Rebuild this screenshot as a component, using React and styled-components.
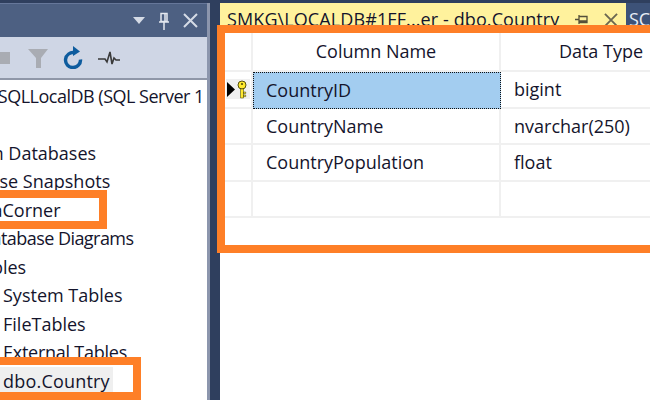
import React from 'react';
import styled, { createGlobalStyle } from 'styled-components';

const Global = createGlobalStyle`
  html, body {
    margin: 0;
    padding: 0;
    background: #2f3f5e;
  }
  * {
    box-sizing: border-box;
  }
`;

const Page = styled.div`
  position: relative;
  width: 650px;
  height: 400px;
  overflow: hidden;
  display: flex;
  padding-top: 3px;
  background: #2f3f5e;
  font-family: 'Open Sans', 'Noto Sans', sans-serif;
  font-size: 18px;
  color: #14142c;
`;

const Explorer = styled.div`
  width: 210px;
  flex-shrink: 0;
  display: flex;
  flex-direction: column;
  border-right: 3px solid #8c96ad;
`;

const TitleBar = styled.div`
  height: 34px;
  flex-shrink: 0;
  display: flex;
  align-items: center;
  justify-content: flex-end;
  gap: 13px;
  padding-right: 9px;
  background: #4d6082;
  border-top: 1px solid #66779a;
`;

const Toolbar = styled.div`
  height: 43px;
  flex-shrink: 0;
  display: flex;
  align-items: center;
  gap: 15px;
  background: #cfd6e5;
  border-bottom: 2px solid #8f97a8;
`;

const StopButton = styled.div`
  width: 10px;
  height: 12px;
  margin-right: 3px;
  background: #a9acb3;
`;

const Tree = styled.div`
  position: relative;
  flex: 1;
  overflow: hidden;
  padding-top: 2px;
  background: #fff;
`;

const TreeRow = styled.div`
  height: 28.5px;
  line-height: 28px;
  white-space: nowrap;
  margin-left: ${(props) => props.$indent}px;
  letter-spacing: ${(props) => props.$spacing || 0}px;
`;

const Spacer = styled.div`
  height: 28px;
`;

const SelectedNode = styled.span`
  display: inline-block;
  padding: 0 3px 0 3px;
  background: #efefef;
  letter-spacing: 0.2px;
`;

const Callout = styled.div`
  position: absolute;
  border: 8px solid #fe7f27;
  pointer-events: none;
`;

const TreeCallout = styled(Callout)`
  left: -20px;
  top: ${(props) => props.$top}px;
  width: ${(props) => props.$width}px;
  height: ${(props) => props.$height}px;
`;

const GridCallout = styled(Callout)`
  left: 217px;
  top: 25px;
  width: 460px;
  height: 228px;
`;

const Editor = styled.div`
  flex: 1;
  min-width: 0;
  margin-left: 10px;
  display: flex;
  flex-direction: column;
`;

const TabStrip = styled.div`
  height: 24px;
  flex-shrink: 0;
  display: flex;
  overflow: hidden;
`;

const ActiveTab = styled.div`
  width: 406px;
  flex-shrink: 0;
  display: flex;
  align-items: flex-start;
  padding: 0 8px 0 7px;
  background: #fff29d;
  white-space: nowrap;
`;

const TabTitle = styled.span`
  flex: 1;
  padding-top: 4px;
  line-height: 24px;
  letter-spacing: 0.1px;
`;

const TabIcons = styled.span`
  display: flex;
  gap: 16px;
  padding-top: 10px;
`;

const NextTab = styled.div`
  flex: 1;
  padding: 4px 0 0 3px;
  background: #3d5278;
  color: #e8edf5;
  line-height: 24px;
`;

const Designer = styled.div`
  flex: 1;
  padding: 6px 0 0 5px;
  background: #fff;
`;

const GridRow = styled.div`
  display: grid;
  grid-template-columns: 28px 248px 200px;
  height: ${(props) => (props.$header ? 39 : 36.6)}px;
  border-bottom: 2px solid #f0f0f0;
`;

const RowHeader = styled.div`
  display: flex;
  align-items: center;
  justify-content: center;
  border-right: 2px solid #f0f0f0;
`;

const KeyMarker = styled.div`
  width: 24px;
  height: 20px;
  display: flex;
  align-items: center;
  justify-content: center;
  background: #f0f0f0;
`;

const Cell = styled.div`
  display: flex;
  align-items: center;
  justify-content: ${(props) => (props.$head ? 'center' : 'flex-start')};
  padding: ${(props) => (props.$head ? '0 0 2px' : '0 0 0 13px')};
  border-right: ${(props) => (props.$last ? 'none' : '2px solid #f0f0f0')};
  white-space: nowrap;
  overflow: hidden;
`;

const SelectedCell = styled(Cell)`
  margin-bottom: -2px;
  background: #a3cdf0;
  border: 1px dotted #111;
  padding-left: 12px;
`;

const DropIcon = () => (
  <svg width="12" height="7" viewBox="0 0 12 7">
    <path d="M0 0h12L6 7z" fill="#d5dbe6" />
  </svg>
);

const PinIcon = () => (
  <svg width="12" height="18" viewBox="0 0 12 18" fill="none" stroke="#e4e8f0" strokeWidth="1.5">
    <path d="M3 1.5h6v8H3zM7 2v7M1 10h10M6 10v8" />
  </svg>
);

const CloseIcon = ({ size = 15, color = '#d5dbe6' }) => (
  <svg width={size} height={size} viewBox="0 0 15 15" fill="none" stroke={color} strokeWidth="2">
    <path d="M1 1l13 13M14 1L1 14" />
  </svg>
);

const FilterIcon = () => (
  <svg width="20" height="20" viewBox="0 0 20 20">
    <path d="M0 1h20l-7 9v10H8V10z" fill="#a9acb3" />
  </svg>
);

const RefreshIcon = () => (
  <svg width="20" height="23" viewBox="0 0 20 23" fill="none">
    <path d="M11.5 6.7A7.5 7.5 0 1 0 17.5 13.5" stroke="#0e5c9e" strokeWidth="3.4" />
    <path d="M10 0l7 5.5-7 4.5z" fill="#0e5c9e" />
  </svg>
);

const ActivityIcon = () => (
  <svg width="23" height="14" viewBox="0 0 23 14" fill="none" stroke="#3a3a3a" strokeWidth="1.6">
    <path d="M0 8h7l2 3 3-10 2 12 2-6 2 2h4" />
  </svg>
);

const TabPinIcon = () => (
  <svg width="13" height="13" viewBox="0 0 13 13" fill="none" stroke="#55503a" strokeWidth="1.3">
    <path d="M0 6.5h4M4 2v9M4 3.5h8v6H4M4 8h8" />
  </svg>
);

const KeyIcon = () => (
  <svg width="22" height="19" viewBox="0 0 22 19">
    <path d="M0 2l8 7.5L0 17z" fill="#000" />
    <circle cx="15" cy="5" r="4" fill="#ffe92e" stroke="#54500c" strokeWidth="1" />
    <path d="M13.5 9h3v9h-3zM16.5 12h2.2v1.6h-2.2zM16.5 15h2.2v1.6h-2.2z" fill="#ffe92e" stroke="#54500c" strokeWidth="0.6" />
    <circle cx="15" cy="4" r="1.1" fill="#54500c" />
  </svg>
);

const treeRows = [
  { label: 'System Databases', indent: -57 },
  { label: 'Database Snapshots', indent: -61 },
  { label: 'DataCorner', indent: -37 },
  { label: 'Database Diagrams', indent: -21, spacing: -0.55 },
  { label: 'Tables', indent: -28 },
  { label: 'System Tables', indent: 3 },
  { label: 'FileTables', indent: 3 },
  { label: 'External Tables', indent: 3, spacing: -0.25 },
];

const columns = [
  { name: 'CountryID', type: 'bigint', selected: true },
  { name: 'CountryName', type: 'nvarchar(250)' },
  { name: 'CountryPopulation', type: 'float' },
  { name: '', type: '' },
];

const App = () => {
  return (
    <Page>
      <Global />
      <Explorer>
        <TitleBar>
          <DropIcon />
          <PinIcon />
          <CloseIcon />
        </TitleBar>
        <Toolbar>
          <StopButton />
          <FilterIcon />
          <RefreshIcon />
          <ActivityIcon />
        </Toolbar>
        <Tree>
          <TreeRow $indent={-100} $spacing={-0.5}>(localdb)\MSSQLLocalDB (SQL Server 1</TreeRow>
          <Spacer />
          {treeRows.map((row) => (
            <TreeRow key={row.label} $indent={row.indent} $spacing={row.spacing}>
              {row.label}
            </TreeRow>
          ))}
          <TreeRow $indent={0}>
            <SelectedNode>dbo.Country</SelectedNode>
          </TreeRow>
          <TreeCallout $top={110} $width={127} $height={39} />
          <TreeCallout $top={277} $width={161} $height={43} />
        </Tree>
      </Explorer>
      <Editor>
        <TabStrip>
          <ActiveTab>
            <TabTitle>SMKG\LOCALDB#1FF...er - dbo.Country</TabTitle>
            <TabIcons>
              <TabPinIcon />
              <CloseIcon size={14} color="#6b6750" />
            </TabIcons>
          </ActiveTab>
          <NextTab>SC</NextTab>
        </TabStrip>
        <Designer>
          <GridRow $header>
            <RowHeader />
            <Cell $head>Column Name</Cell>
            <Cell $head $last>Data Type</Cell>
          </GridRow>
          {columns.map((column, index) => (
            <GridRow key={index}>
              <RowHeader>
                {column.selected && (
                  <KeyMarker>
                    <KeyIcon />
                  </KeyMarker>
                )}
              </RowHeader>
              {column.selected ? (
                <SelectedCell>{column.name}</SelectedCell>
              ) : (
                <Cell>{column.name}</Cell>
              )}
              <Cell $last>{column.type}</Cell>
            </GridRow>
          ))}
        </Designer>
      </Editor>
      <GridCallout />
    </Page>
  );
};

export default App;
